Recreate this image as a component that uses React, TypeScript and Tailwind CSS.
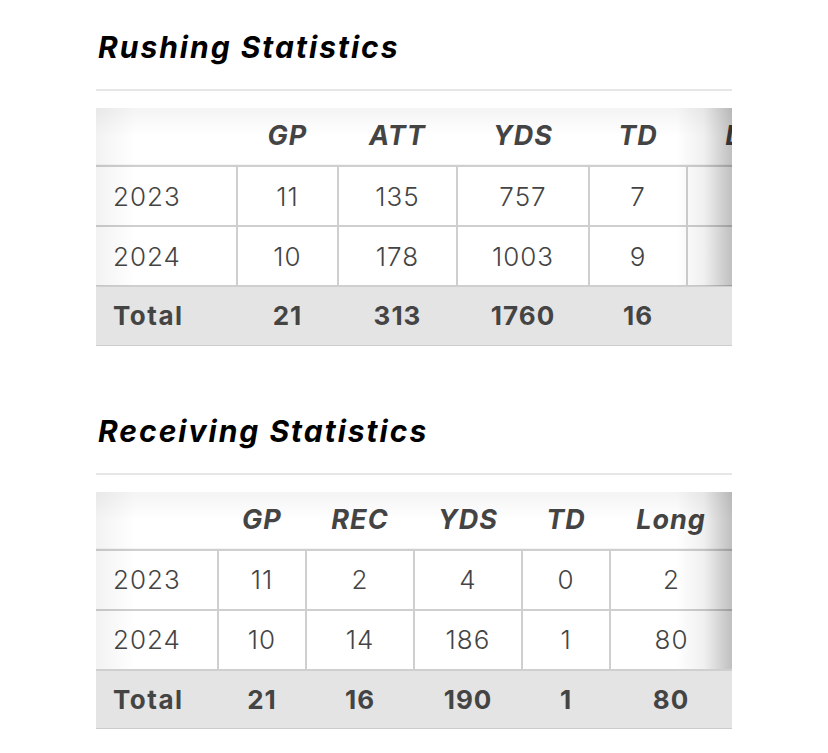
import React from 'react';

type Row = { label: string; values: string[] };

type StatTable = {
  title: string;
  headers: string[];
  widths: string[];
  tableWidth: string;
  rows: Row[];
  total: Row;
};

const tables: StatTable[] = [
  {
    title: 'Rushing Statistics',
    headers: ['GP', 'ATT', 'YDS', 'TD', 'Long'],
    widths: ['w-[141px]', 'w-[101px]', 'w-[119px]', 'w-[132px]', 'w-[98px]', 'w-[146px]'],
    tableWidth: 'w-[737px]',
    rows: [
      { label: '2023', values: ['11', '135', '757', '7', ''] },
      { label: '2024', values: ['10', '178', '1003', '9', ''] },
    ],
    total: { label: 'Total', values: ['21', '313', '1760', '16', ''] },
  },
  {
    title: 'Receiving Statistics',
    headers: ['GP', 'REC', 'YDS', 'TD', 'Long'],
    widths: ['w-[122px]', 'w-[88px]', 'w-[108px]', 'w-[108px]', 'w-[88px]', 'w-[122px]'],
    tableWidth: 'w-[636px]',
    rows: [
      { label: '2023', values: ['11', '2', '4', '0', '2'] },
      { label: '2024', values: ['10', '14', '186', '1', '80'] },
    ],
    total: { label: 'Total', values: ['21', '16', '190', '1', '80'] },
  },
];

function StatsSection({ table }: { table: StatTable }) {
  return (
    <section>
      <h2 className="pl-[2px] text-[30px] leading-9 font-bold italic text-black tracking-[2px]">
        {table.title}
      </h2>
      <div className="mt-6 h-0.5 bg-[#e6e6e6]" />

      <div className="relative mt-[17px] overflow-hidden">
        <table className={`${table.tableWidth} table-fixed border-collapse text-[#444]`}>
          <colgroup>
            {table.widths.map((w, i) => (
              <col key={i} className={w} />
            ))}
          </colgroup>
          <thead>
            <tr className="h-[58px] border-b-2 border-[#cfcfcf] bg-gradient-to-b from-[#f4f4f4] via-white to-white">
              <th />
              {table.headers.map(h => (
                <th key={h} className="text-[27px] font-bold italic text-center tracking-[1px]">
                  {h}
                </th>
              ))}
            </tr>
          </thead>
          <tbody>
            {table.rows.map(row => (
              <tr key={row.label} className="h-[60px] border-b-2 border-[#cfcfcf]">
                <td className="pl-[17px] text-left text-[26px] font-light tracking-[1px]">{row.label}</td>
                {row.values.map((v, i) => (
                  <td key={i} className="border-l-2 border-[#cfcfcf] text-center text-[26px] font-light tracking-[1px]">
                    {v}
                  </td>
                ))}
              </tr>
            ))}
            <tr className="h-[59px] border-b border-[#cccccc] bg-[#e4e4e4]">
              <td className="pl-[17px] text-left text-[26px] font-bold tracking-[1.5px]">{table.total.label}</td>
              {table.total.values.map((v, i) => (
                <td key={i} className="text-center text-[26px] font-bold tracking-[1px]">
                  {v}
                </td>
              ))}
            </tr>
          </tbody>
        </table>

        {/* scroll shadows */}
        <div className="pointer-events-none absolute top-0 left-0 bottom-[60px] w-10 bg-gradient-to-r from-black/[0.05] to-transparent" />
        <div className="pointer-events-none absolute top-0 right-0 bottom-[60px] w-14 bg-gradient-to-l from-black/25 via-black/[0.06] to-transparent" />
      </div>
    </section>
  );
}

export default function App() {
  return (
    <div className="min-h-screen bg-white px-24 pt-[29px] font-['Inter','Liberation_Sans',sans-serif]">
      <div className="flex flex-col gap-[67px]">
        {tables.map(t => (
          <StatsSection key={t.title} table={t} />
        ))}
      </div>
    </div>
  );
}
